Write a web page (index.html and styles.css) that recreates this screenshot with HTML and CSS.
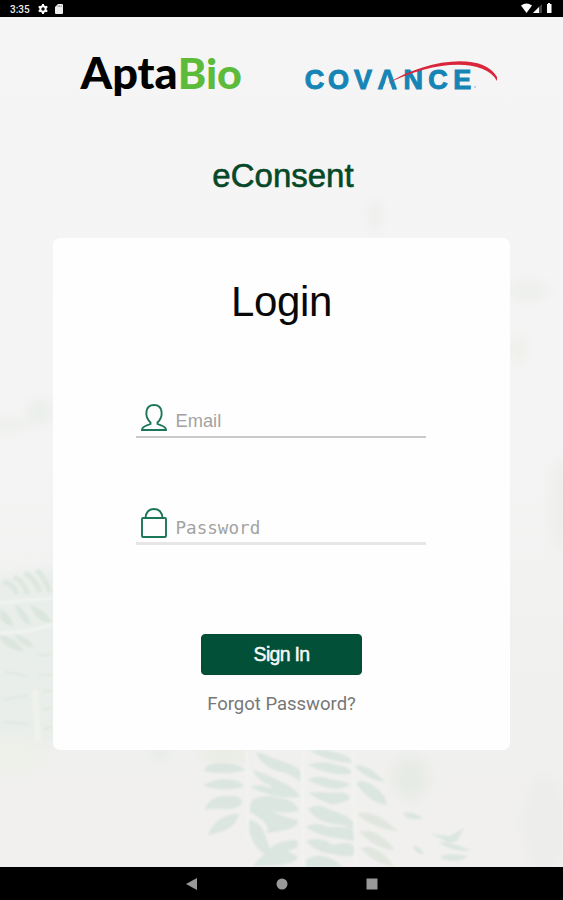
FILE: index.html
```html
<!DOCTYPE html>
<html lang="en">
<head>
  <meta charset="UTF-8" />
  <meta name="viewport" content="width=device-width, initial-scale=1.0" />
  <title>eConsent Login</title>
  <link rel="stylesheet" href="styles.css">
</head>
<body>
  <div class="status-bar">
    <span class="time">3:35</span>
    <svg class="gear" width="10" height="10" viewBox="0 0 10 10"><circle cx="5" cy="5" r="2.7" fill="none" stroke="#fff" stroke-width="2"/><path d="M5 0v2M5 8v2M.7 2.5l1.700 1M7.600 6.500l1.700 1M.7 7.500l1.700-1M7.600 3.500l1.700-1" stroke="#fff" stroke-width="2"/></svg>
    <svg width="8" height="10" viewBox="0 0 8 10"><path d="M3 0h4q1 0 1 1v8q0 1-1 1H1q-1 0-1-1V3z" fill="#eee"/><path d="M3 1.500v1.400M4.700 1.500v1.400M6.300 1.500v1.400" stroke="#555" stroke-width=".7"/></svg>
    <svg class="signals" width="32" height="12" viewBox="0 0 32 12"><path d="M0 2.500q5.500-4 11 0L5.500 10z" fill="#fff"/><path d="M21 1v9H12z" fill="#444"/><path d="M18 4v6h-6z" fill="#fff"/><path d="M26 1h1V0h2v1h1.500v9H26z" fill="#fff"/></svg>
  </div>

  <main class="screen">
    <svg class="foliage" viewBox="0 17 563 850" preserveAspectRatio="none">
      <defs>
        <filter id="soft" filterUnits="userSpaceOnUse" x="-20" y="0" width="600" height="900"><feGaussianBlur stdDeviation="1"/></filter>
        <filter id="haze" filterUnits="userSpaceOnUse" x="-60" y="0" width="680" height="900"><feGaussianBlur stdDeviation="6"/></filter>
      </defs>
      <g filter="url(#haze)">
        <ellipse cx="375" cy="215" rx="8" ry="17" fill="#eeefed"/>
        <ellipse cx="528" cy="290" rx="22" ry="12" fill="#eef0ed"/>
        <ellipse cx="518" cy="350" rx="9" ry="14" fill="#eff0ea"/>
        <ellipse cx="562" cy="505" rx="12" ry="48" fill="#eeeeec"/>
        <ellipse cx="8" cy="426" rx="22" ry="5" fill="#ecefe9"/>
        <ellipse cx="40" cy="412" rx="14" ry="14" fill="#ebefeb"/>
        <path d="M-20 580l80-13v175l-60 7-20-5z" fill="#e9eeea"/>
        <ellipse cx="12" cy="755" rx="35" ry="18" fill="#eef0ea"/>
        <ellipse cx="410" cy="778" rx="18" ry="22" fill="#e7ebe5"/>
        <ellipse cx="225" cy="755" rx="26" ry="8" fill="#e8ece2"/>
        <ellipse cx="545" cy="825" rx="22" ry="50" fill="#ededeb"/>
        <ellipse cx="160" cy="752" rx="7" ry="10" fill="#e6ebe7"/>
      </g>
      <g filter="url(#soft)" fill="#dbe6df">
        <path d="M3 582q10 1 14 12M14 577q9 4 14 17M25 573q10 6 15 19M37 570q8 8 13 22" fill="none" stroke="#dde7e0" stroke-width="5"/>
        <path d="M0 609q10 4 14 17-10-1-14-8zM15 604q13 8 16 21-12-3-16-21zM30 605q18 6 22 18-16 0-22-18zM0 635q17 3 24 17-16-2-24-13zM14 634q15 3 20 13-12 1-20-13z"/>
        <path d="M0 603l53-5M0 633q34-1 53-9" fill="none" stroke="#f1f4f1" stroke-width="3"/>
        <path d="M35 690l3 52" fill="none" stroke="#f0f2ec" stroke-width="6"/>
        <path d="M38 656l15-2M38 675h15M42 692l11-2M43 710l10-3M43 730l10-4M5 672l22 4M3 700l25-5M4 722l25 2" fill="none" stroke="#e1e9e2" stroke-width="2.500"/>
      </g>
      <g filter="url(#soft)" fill="#dce6e0">
        <path d="M204 770q3-7 18-7 17 0 23 7-17 6-41 1zM204 785q9-6 22-6 15 1 18 7-15 7-40 0zM205 808q6-12 20-12 15-1 17 5 0 8-17 8-12-1-20 1zM208 835q8-21 31-21-3 17-31 21z"/>
        <path d="M256 753q3-2 16 5 19 5 28 12v12q-9-9-23-11-15-5-21-18zM253 770q12 3 29 12 14 7 18 14-26 4-29-10-14-5-18-16zM250 787q10-4 20 1 20-4 29 9-22 3-49-10zM251 801q12-8 28-3 16 1 20 13-25 6-48-10z"/>
        <path d="M250 803q7-5 17 4 10 9 31 13 3 10-33 13 10-6-15-21zM247 820q12 0 17 12l8 23q-12 0-18-12-8-13-7-23zM268 850q11-11 29-10 4 10-10 10l11 7q-3 10-45 9 8-10 15-16z"/>
        <path d="M310 751q12-3 24 1 18 4 18 11-23-1-42-12zM308 765q14-6 28 0 13 1 16 8-17 5-44-8zM308 780q8-6 21-1 18 2 21 6-17 9-42-5zM308 793q15-2 22 0 18-3 20 6-10 6-20 5-13-5-22-11zM308 809q9-7 23 1 17 5 22 12v8q-8-6-20-6-18-3-25-15zM306 827q9-6 23 0 22-1 25 5v9l-18-3q-18-2-30-11zM306 841q14-6 27 4 21-6 21 4v6q-10 3-21-1-15 0-27-13zM306 860q18-11 37 7h-37z"/>
        <path d="M354 766q14-3 31 16-18-2-31-16zM356 783q12-6 29 14l2 8q-18-2-31-22z"/>
        <path d="M357 814q15-7 41 17-25-2-41-17zM359 832q17-6 36 18-18 0-36-18zM360 848q17-5 34 18-18-1-34-18z" fill="#e1e7df"/>
        <path d="M403 814q7-5 20 4-15 4-20-4zM413 846q7 0 11 8-8 1-11-8zM438 842q15 0 34 9-20 1-34-9zM441 857q5-5 27-1-9 8-26 3zM430 834l20 2 14-8-7 13q-10 4-15-2z"/>
        <path d="M247 751l1 88M303 751v116M353 751l3 116" fill="none" stroke="#f2f3f1" stroke-width="2.500"/>
      </g>
    </svg>

    <header class="logos">
      <svg class="apta" width="170" height="55" viewBox="75 50 170 55">
        <text x="80.500" y="88.500" textLength="161.500" lengthAdjust="spacingAndGlyphs">Apta<tspan class="bio">Bio</tspan></text>
      </svg>
      <svg class="covance" width="205" height="55" viewBox="300 50 205 55">
        <text x="304.700 328 354 377.500 403.500 428.200 453.300" y="88.500">COVANCE</text>
        <path d="M382.600 90h9.600l-3.400-10.500h-2.800z" fill="#f4f4f4"/>
        <path d="M387 84C423 60 483 51 497 77v4C484 57 431 61 387 84z" fill="#d9263c"/>
        <circle cx="475" cy="87" r="1" fill="#abc7d2"/>
      </svg>
    </header>

    <h1 class="app-name">eConsent</h1>

    <form class="card">
      <h2 class="title">Login</h2>
      <label class="field">
        <svg width="28" height="30" viewBox="0 0 28 30"><path d="M10.500 20.500C4.500 15 4.500 3 14 3s9.500 12 3.500 17.500v1.500c4 1.800 8.500 2 8.500 6H2c0-4 4.500-4.200 8.500-6z"/></svg>
        <input type="email" placeholder="Email">
      </label>
      <label class="field password">
        <svg width="28" height="32" viewBox="0 0 28 32"><rect x="2" y="11" width="24" height="19" rx="1"/><path d="M5.500 11C6 5 9 2 14 2s8 3 8.500 9"/></svg>
        <input type="password" placeholder="Password">
      </label>
      <button class="sign-in" type="button">Sign In</button>
      <a class="forgot">Forgot Password?</a>
    </form>
  </main>

  <nav class="nav-bar">
    <svg width="12" height="12" viewBox="0 0 12 12"><path d="M0 6L11 0v12z"/></svg>
    <svg width="12" height="12" viewBox="0 0 12 12"><circle cx="6" cy="6" r="5.500"/></svg>
    <svg width="12" height="12" viewBox="0 0 12 12"><path d="M.5.5h11v11H.5z"/></svg>
  </nav>
</body>
</html>
```
FILE: styles.css
```css
* {
  box-sizing: border-box;
  margin: 0;
  padding: 0;
}
body {
  display: flex;
  flex-direction: column;
  height: 900px;
  overflow: hidden;
  background: #000;
  font-family: "Liberation Sans", Arial, sans-serif;
}
.status-bar {
  display: flex;
  align-items: center;
  flex: 0 0 17px;
  padding: 1px 10px 0 10px;
  background: #000;
}
.time {
  width: 28px;
  color: #eee;
  font: 500 10px Roboto, sans-serif;
}
.gear {
  margin-right: 7px;
}
.signals {
  margin-left: auto;
}
.screen {
  position: relative;
  display: flex;
  flex-direction: column;
  align-items: center;
  flex: 0 0 850px;
  background: linear-gradient(#f5f5f5 0%, #f4f4f4 50%, #f0f0ef 80%, #f1f0ef 100%);
}
.foliage {
  position: absolute;
  inset: 0;
  width: 100%;
  height: 100%;
}
.logos {
  display: flex;
  gap: 55px;
  z-index: 1;
  margin-top: 33px;
  padding-left: 17px;
}
.logos svg {
  overflow: visible;
}
.apta {
  font: 900 44px Lato, sans-serif;
}
.bio {
  fill: #5dbb3b;
  font-size: 42px;
}
.covance {
  font: bold 27px "Liberation Sans", Arial, sans-serif;
  fill: #1685b5;
}
.covance text {
  stroke: #1685b5;
  stroke-width: 1px;
}
.app-name {
  z-index: 1;
  height: 40px;
  margin-top: 51px;
  padding-left: 3px;
  color: #064827;
  font-size: 33px;
  font-weight: normal;
  line-height: 40px;
  -webkit-text-stroke: .6px #064827;
}
.card {
  z-index: 1;
  display: flex;
  flex-direction: column;
  align-items: center;
  width: 457px;
  height: 512px;
  margin-top: 42px;
  padding-top: 39px;
  border-radius: 7px;
  background: #fefefe;
}
.title {
  height: 50px;
  color: #080808;
  font-size: 42px;
  font-weight: normal;
  letter-spacing: -.4px;
  line-height: 50px;
}
.field {
  display: flex;
  align-items: flex-end;
  gap: 8px;
  width: 290px;
  height: 36px;
  margin: 75px 2px 0 0;
  padding: 0 0 4px 4px;
  border-bottom: 2px solid #c9c9c9;
}
.field svg {
  flex: none;
  fill: none;
  stroke: #1b765a;
  stroke-width: 1.9;
}
.field input {
  width: 230px;
  height: 23px;
  border: 0;
  outline: 0;
  background: none;
  font: 18.3px "Liberation Sans", Arial, sans-serif;
}
.field input::placeholder {
  color: #a3a3a3;
}
.password {
  height: 40px;
  margin-top: 67px;
  padding-bottom: 3px;
  border-bottom: 3px solid #e6e6e6;
}
.password input {
  height: 22px;
  font: 17.6px "DejaVu Sans Mono", monospace;
}
.sign-in {
  width: 161px;
  height: 41px;
  margin-top: 89px;
  border: 1px solid #064a32;
  border-radius: 4px;
  background: #035039;
  color: #f5f8f6;
  font: 19.5px "Liberation Sans", Arial, sans-serif;
  letter-spacing: -.7px;
  -webkit-text-stroke: .5px #f5f8f6;
}
.forgot {
  margin-top: 17px;
  color: #777;
  font: 18.5px/24px Roboto, sans-serif;
}
.nav-bar {
  display: flex;
  align-items: center;
  justify-content: center;
  gap: 78px;
  flex: 0 0 33px;
  background: #000;
  fill: #999;
}
```
